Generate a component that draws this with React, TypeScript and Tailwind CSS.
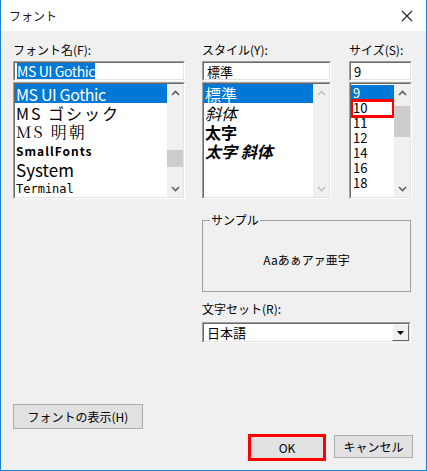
import type { ReactNode, CSSProperties } from 'react';

const ui = { fontFamily: '"Noto Sans CJK JP", "Noto Sans", sans-serif' };

function Sunken({ className = '', children }: { className?: string; children: ReactNode }) {
  return (
    <div className={`border border-t-[#a0a0a0] border-l-[#a0a0a0] border-b-white border-r-white ${className}`}>
      <div className="h-full border border-t-[#696969] border-l-[#696969] border-b-[#e3e3e3] border-r-[#e3e3e3] bg-white overflow-hidden">
        {children}
      </div>
    </div>
  );
}

function Chevron({ up, muted }: { up?: boolean; muted?: boolean }) {
  return (
    <svg width="9" height="6" viewBox="0 0 9 6">
      <polyline
        points={up ? '1,5 4.5,1.5 8,5' : '1,1 4.5,4.5 8,1'}
        fill="none"
        stroke={muted ? '#c0c0c0' : '#606060'}
        strokeWidth="1.6"
      />
    </svg>
  );
}

function ScrollBar({ thumbTop, thumbHeight, muted }: { thumbTop?: number; thumbHeight?: number; muted?: boolean }) {
  return (
    <div className="w-[16px] h-full bg-[#f0f0f0] flex flex-col relative">
      <div className="h-[17px] flex items-center justify-center">
        <Chevron up muted={muted} />
      </div>
      <div className="flex-1" />
      <div className="h-[17px] flex items-center justify-center">
        <Chevron muted={muted} />
      </div>
      {thumbTop !== undefined && (
        <div
          className="absolute left-0 right-0 bg-[#cdcdcd]"
          style={{ top: thumbTop, height: thumbHeight }}
        />
      )}
    </div>
  );
}

const fontItems: { label: string; className: string; style?: CSSProperties }[] = [
  { label: 'MS UI Gothic', className: 'text-[16px] tracking-[-0.4px]' },
  { label: 'MS ゴシック', className: 'text-[16px] tracking-[2px]' },
  { label: 'MS 明朝', className: 'text-[16px] tracking-[2px]', style: { fontFamily: '"Noto Serif CJK JP", "Noto Sans CJK JP", serif' } },
  { label: 'SmallFonts', className: 'text-[12px] font-bold tracking-[1px]' },
  { label: 'System', className: 'text-[17px]' },
  { label: 'Terminal', className: 'text-[12px]', style: { fontFamily: '"DejaVu Sans Mono", monospace' } },
];

const styleItems = [
  { label: '標準', className: '' },
  { label: '斜体', className: 'italic' },
  { label: '太字', className: 'font-bold' },
  { label: '太字 斜体', className: 'font-bold italic' },
];

const sizeItems = ['9', '10', '11', '12', '14', '16', '18'];

export default function App() {
  return (
    <div
      className="w-[427px] h-[471px] bg-[#f0f0f0] border-x border-b border-[#1883d7] text-black text-[12px] flex flex-col"
      style={ui}
    >
      {/* Title bar */}
      <div className="h-[31px] bg-white flex items-center justify-between pl-[8px] pr-[13px] shrink-0">
        <span className="text-[12px] text-[#1a1a1a]">フォント</span>
        <svg width="12" height="12" viewBox="0 0 12 12">
          <path d="M1 1 L11 11 M11 1 L1 11" stroke="#222" strokeWidth="1.1" />
        </svg>
      </div>

      <div className="flex-1 flex flex-col pl-[12px] pr-[12px] pt-[11px]">
        {/* Font / style / size pickers */}
        <div className="flex">
          <div className="w-[172px] flex flex-col">
            <div className="h-[16px] leading-[16px] mb-[3px]">フォント名(F):</div>
            <Sunken className="h-[20px]">
              <div className="px-[2px] pt-[1px] leading-[15px]">
                <span className="bg-[#0078d7] text-white text-[14px] tracking-[-0.4px]">MS UI Gothic</span>
              </div>
            </Sunken>
            <Sunken className="h-[117px] mt-[1px]">
              <div className="flex h-full">
                <div className="flex-1 flex flex-col">
                  {fontItems.map((f, i) => (
                    <div
                      key={f.label}
                      className={`h-[19px] shrink-0 flex items-center leading-none px-[1px] whitespace-nowrap ${
                        i === 0 ? 'bg-[#0078d7] text-white' : ''
                      } ${f.className}`}
                      style={f.style}
                    >
                      {f.label}
                    </div>
                  ))}
                </div>
                <ScrollBar thumbTop={66} thumbHeight={17} />
              </div>
            </Sunken>
          </div>

          <div className="w-[129px] ml-[17px] flex flex-col">
            <div className="h-[16px] leading-[16px] mb-[3px]">スタイル(Y):</div>
            <Sunken className="h-[20px]">
              <div className="px-[3px] leading-[17px] text-[13px]">標準</div>
            </Sunken>
            <Sunken className="h-[117px] mt-[1px]">
              <div className="flex h-full">
                <div className="flex-1 flex flex-col">
                  {styleItems.map((s, i) => (
                    <div
                      key={s.label}
                      className={`h-[19px] shrink-0 flex items-center leading-none px-[1px] text-[16px] whitespace-nowrap ${
                        i === 0 ? 'bg-[#0078d7] text-white' : ''
                      } ${s.className}`}
                    >
                      {s.label}
                    </div>
                  ))}
                </div>
                <ScrollBar muted />
              </div>
            </Sunken>
          </div>

          <div className="w-[63px] ml-[18px] flex flex-col">
            <div className="h-[16px] leading-[16px] mb-[3px]">サイズ(S):</div>
            <Sunken className="h-[20px]">
              <div className="px-[3px] leading-[17px] text-[13px]">9</div>
            </Sunken>
            <Sunken className="h-[117px] mt-[1px]">
              <div className="flex h-full">
                <div className="flex-1 flex flex-col pt-[1px]">
                  {sizeItems.map((s, i) => (
                    <div
                      key={s}
                      className={`relative h-[15px] shrink-0 flex items-center leading-none px-[2px] text-[13px] ${
                        i === 0 ? 'bg-[#0078d7] text-white' : ''
                      }`}
                    >
                      {s}
                      {i === 1 && (
                        <span className="absolute left-[-1px] right-[-1px] top-[-1px] bottom-[-3px] border-[3px] border-[#ff0000]" />
                      )}
                    </div>
                  ))}
                </div>
                <ScrollBar thumbTop={22} thumbHeight={31} />
              </div>
            </Sunken>
          </div>
        </div>

        {/* Sample preview and charset */}
        <div className="ml-[189px] w-[209px] mt-[13px] flex flex-col">
          <fieldset className="border border-[#a0a0a0] pl-[7px]">
            <legend className="px-[1px] leading-[16px]">サンプル</legend>
            <div className="h-[63px] flex items-center justify-center pr-[7px] pt-[1px] text-[12px]">
              Aaあぁアァ亜宇
            </div>
          </fieldset>
          <div className="h-[16px] leading-[16px] mt-[9px]">文字セット(R):</div>
          <Sunken className="h-[21px] mt-[5px]">
            <div className="flex h-full">
              <div className="flex-1 px-[3px] leading-[17px] text-[13px]">日本語</div>
              <div className="w-[17px] bg-[#f0f0f0] border border-t-white border-l-white border-b-[#696969] border-r-[#696969] flex items-center justify-center">
                <svg width="7" height="4" viewBox="0 0 7 4">
                  <polygon points="0,0 7,0 3.5,4" fill="#000" />
                </svg>
              </div>
            </div>
          </Sunken>
        </div>

        {/* Buttons */}
        <div className="mt-[61px]">
          <button className="w-[130px] h-[25px] bg-[#e1e1e1] border border-[#adadad] text-[12px]">
            フォントの表示(H)
          </button>
        </div>
        <div className="flex justify-end items-start mt-[5px] pr-[1px]">
          <button className="w-[78px] h-[27px] bg-[#e1e1e1] border-[3px] border-[#ff0000] text-[12px]">
            OK
          </button>
          <button className="w-[79px] h-[23px] mt-[1px] ml-[8px] bg-[#e1e1e1] border border-[#adadad] text-[12px]">
            キャンセル
          </button>
        </div>
      </div>
    </div>
  );
}
